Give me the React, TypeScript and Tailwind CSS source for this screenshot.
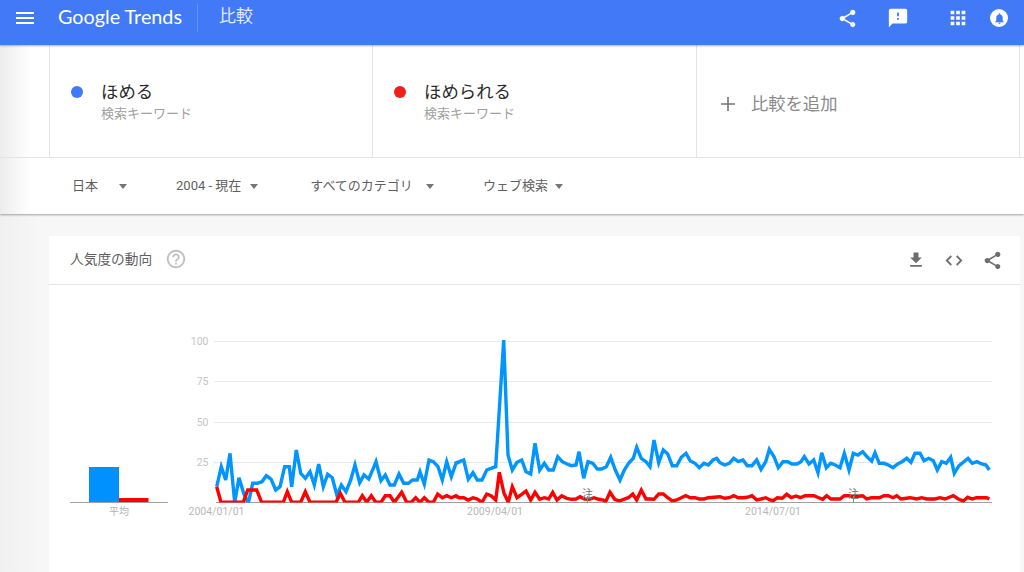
const font = { fontFamily: '"Roboto", "Noto Sans CJK JP", sans-serif' };

// series traced from the chart, as flat x,y lists per chart section
const toPoints = (list: number[], ox: number, oy: number) => {
  const out: string[] = [];
  for (let i = 0; i < list.length; i += 2) {
    out.push(`${(ox + list[i] / 3).toFixed(1)},${(oy + list[i + 1] / 3).toFixed(1)}`);
  }
  return out.join(" ");
};

const blueA = [110,470,124,410,137,450,150,370,164,517,177,443,191,490,205,520,218,460,232,460,246,455,259,437,273,447,287,480,300,470,314,410,328,410,335,470,349,360,362,430,376,445,390,425,403,465,416,402,430,470,443,433,457,443,471,497,484,465,498,485,512,450,525,405,539,458,552,435,566,447,580,415,588,395,603,452,616,435,630,465,643,465,657,432,671,460,685,460,698,450,712,450,720,425,733,462,747,390,760,395,774,410,787,450,800,395,814,440,828,400,840,395];
const blueB = [14,400,28,395,41,390,55,448,69,428,82,450,96,450,110,420,123,415,137,410,161,30,174,375,187,420,201,397,215,390,228,425,242,432,255,340,269,420,283,400,296,420,310,420,323,380,337,395,351,402,364,407,378,405,387,365,401,445,414,395,428,400,442,417,455,417,469,410,482,382,496,420,510,450,523,420,537,398,550,385,560,352,574,385,588,395,600,410,612,330,626,398,640,360,653,372,667,407,680,407,694,382,708,370,721,393,735,400,748,413,762,400,775,405,789,390,800,385];
const blueC = [0,188,14,195,28,190,41,175,55,185,69,180,82,197,96,197,110,180,123,208,137,185,148,148,162,170,175,203,189,185,203,185,216,192,230,192,243,185,253,170,267,192,281,180,294,218,305,158,319,203,332,190,346,195,360,203,373,160,387,210,400,160,414,165,428,155,441,170,455,183,465,158,478,190,492,190,505,195,519,203,533,192,546,185,560,175,573,187,585,160,600,160,612,182,626,175,640,182,652,210,665,185,679,190,692,172,703,220,717,197,730,187,744,175,757,190,771,185,785,192,798,195,808,210];

const redA = [110,470,123,517,190,517,203,480,230,480,245,517,310,517,322,485,335,517,362,517,376,485,390,517,468,517,481,490,495,517,535,517,547,497,560,517,574,497,587,517,603,517,616,497,630,497,643,517,665,487,680,517,694,517,707,503,720,517,733,503,747,517,760,517,773,492,787,503,800,497,814,503,828,497,840,505];
const redB = [14,497,28,503,41,503,55,510,69,503,82,507,96,517,110,492,123,497,137,510,148,427,162,490,175,517,187,470,201,503,215,493,228,483,242,510,255,487,269,508,283,503,296,507,308,487,321,510,335,497,350,505,364,508,378,507,390,500,404,507,418,508,432,503,446,508,460,510,467,515,480,487,494,508,508,513,521,508,535,503,548,492,560,510,574,480,588,507,600,507,612,508,626,492,640,492,653,503,667,513,680,510,694,503,707,497,721,503,735,503,748,507,762,507,775,503];
const redC = [0,290,14,295,28,293,41,287,55,293,69,293,82,292,96,287,110,300,123,297,137,293,150,300,160,302,172,293,187,295,200,283,214,293,228,288,241,293,255,287,282,287,296,293,308,298,320,287,333,297,360,297,373,287,387,287,400,290,428,287,440,297,455,293,478,293,492,287,505,287,519,293,530,287,543,297,570,293,590,297,605,293,620,297,645,297,660,293,675,297,700,287,715,297,730,303,743,292,757,297,770,293,800,293,808,297];

const bluePoints = [toPoints(blueA, 180, 330), toPoints(blueB, 450, 330), toPoints(blueC, 720, 400)].join(" ");
const redPoints = [toPoints(redA, 180, 330), toPoints(redB, 450, 330), toPoints(redC, 720, 400)].join(" ");

const sharePath =
  "M18 16.08c-.76 0-1.44.3-1.96.77L8.91 12.7c.05-.23.09-.46.09-.7s-.04-.47-.09-.7l7.05-4.11c.54.5 1.25.81 2.04.81 1.66 0 3-1.34 3-3s-1.34-3-3-3-3 1.34-3 3c0 .24.04.47.09.7L8.04 9.81C7.5 9.31 6.79 9 6 9c-1.66 0-3 1.34-3 3s1.34 3 3 3c.79 0 1.5-.31 2.04-.81l7.12 4.16c-.05.21-.08.43-.08.65 0 1.61 1.31 2.92 2.92 2.92 1.61 0 2.92-1.31 2.92-2.92s-1.31-2.92-2.92-2.92z";

function Icon({ d, className }: { d: string; className: string }) {
  return (
    <svg viewBox="0 0 24 24" fill="currentColor" className={className}>
      <path d={d} />
    </svg>
  );
}

function Caret({ className }: { className: string }) {
  return <span className={`w-0 h-0 border-x-[4.5px] border-x-transparent border-t-[5px] border-t-[#757575] ${className}`} />;
}

function Term({ color, label, className }: { color: string; label: string; className: string }) {
  return (
    <div className={`h-full shrink-0 border-l border-[#e4e4e4] flex pl-[21px] pt-[35px] ${className}`}>
      <span className={`w-3 h-3 rounded-full mt-[6px] ${color}`} />
      <div className="ml-[18px]">
        <div className="text-[17.4px] leading-6 text-[#2b2b2b]">{label}</div>
        <div className="text-[13px] leading-[18px] mt-[1px] text-[#a0a0a0]">検索キーワード</div>
      </div>
    </div>
  );
}

function Chart() {
  const grid = [
    { y: 341, label: "100" },
    { y: 381, label: "75" },
    { y: 422, label: "50" },
    { y: 462, label: "25" },
  ];
  return (
    <svg viewBox="49 285 971 287" className="block w-[971px] h-[287px]" style={font}>
      <defs>
        <clipPath id="plot">
          <rect x="205" y="335" width="800" height="167.5" />
        </clipPath>
      </defs>
      {grid.map((g) => (
        <g key={g.y}>
          <line x1="214" x2="992" y1={g.y + 0.5} y2={g.y + 0.5} stroke="#e8e8e8" />
          <text x="208.5" y={g.y + 4} textAnchor="end" fontSize="10.5" fill="#c4c4c4">
            {g.label}
          </text>
        </g>
      ))}
      <line x1="216" x2="992" y1="502.5" y2="502.5" stroke="#a0a0a0" />
      <line x1="70" x2="168" y1="502.5" y2="502.5" stroke="#a0a0a0" />
      <rect x="89" y="467" width="30" height="35" fill="#0091ff" />
      <rect x="119" y="498" width="29.5" height="4" fill="#ff0000" />
      <text x="119" y="515" textAnchor="middle" fontSize="10" fill="#b4b4b4">平均</text>

      <g clipPath="url(#plot)" fill="none" strokeWidth="3.4" strokeLinejoin="miter">
        <polyline points={bluePoints} stroke="#0095ff" />
        <polyline points={redPoints} stroke="#ff0000" />
      </g>

      <text x="216.5" y="514.5" textAnchor="middle" fontSize="10.5" fill="#b8b8b8">2004/01/01</text>
      <text x="495" y="514.5" textAnchor="middle" fontSize="10.5" fill="#b8b8b8">2009/04/01</text>
      <text x="773" y="514.5" textAnchor="middle" fontSize="10.5" fill="#b8b8b8">2014/07/01</text>

      <line x1="587.5" x2="587.5" y1="496" y2="503" stroke="#8a8a8a" />
      <text x="587.5" y="498" textAnchor="middle" fontSize="11" fill="#757575">注</text>
      <line x1="853.5" x2="853.5" y1="496" y2="503" stroke="#8a8a8a" />
      <text x="853.5" y="498" textAnchor="middle" fontSize="11" fill="#757575">注</text>
    </svg>
  );
}

export default function App() {
  return (
    <div className="w-[1024px] h-[572px] overflow-hidden flex flex-col bg-[#f6f6f6]" style={font}>
      <header className="relative z-10 h-[45px] shrink-0 bg-[#4179f6] shadow-[0_1px_2px_rgba(0,0,0,0.3)] flex items-start text-white">
        <Icon
          className="w-6 h-6 ml-[13px] mt-[6px] shrink-0"
          d="M3 18h18v-2H3v2zm0-5h18v-2H3v2zm0-7v2h18V6H3z"
        />
        <div className="ml-[21px] mt-[2px] text-[19.8px] leading-7 whitespace-nowrap w-[139px]" style={{ fontFamily: '"Lato", sans-serif' }}>
          Google Trends
        </div>
        <div className="w-px h-[28px] mt-[4px] bg-white/20" />
        <div className="ml-[21px] mt-[2px] text-[17px] leading-7 text-white/85">比較</div>
        <div className="ml-auto flex items-center h-9 pr-[16px]">
          <Icon className="w-[21px] h-[21px]" d={sharePath} />
          <Icon
            className="w-[22px] h-[22px] ml-[29px]"
            d="M20 2H4c-1.1 0-1.99.9-1.99 2L2 22l4-4h14c1.1 0 2-.9 2-2V4c0-1.1-.9-2-2-2zm-7 12h-2v-2h2v2zm0-4h-2V6h2v4z"
          />
          <Icon
            className="w-[22px] h-[22px] ml-[38px]"
            d="M4 8h4V4H4v4zm6 12h4v-4h-4v4zm-6 0h4v-4H4v4zm0-6h4v-4H4v4zm6 0h4v-4h-4v4zm6-10v4h4V4h-4zm-6 4h4V4h-4v4zm6 6h4v-4h-4v4zm0 6h4v-4h-4v4z"
          />
          <span className="w-[18px] h-[18px] ml-[21px] rounded-full bg-white flex items-center justify-center text-[#4179f6]">
            <Icon
              className="w-[13px] h-[13px]"
              d="M12 22c1.1 0 2-.9 2-2h-4c0 1.1.9 2 2 2zm6-6v-5c0-3.07-1.64-5.64-4.5-6.32V4c0-.83-.67-1.5-1.5-1.5s-1.5.67-1.5 1.5v.68C7.63 5.36 6 7.92 6 11v5l-2 2v1h16v-1l-2-2z"
            />
          </span>
        </div>
      </header>

      <section className="relative h-[169px] shrink-0 bg-white shadow-[0_1px_2px_rgba(0,0,0,0.35)]">
        <div className="absolute inset-y-0 left-0 w-[30px] bg-gradient-to-r from-[#ececec] to-white" />
        <div className="relative h-[113px] border-b border-[#e4e4e4] flex pl-[49px]">
          <Term className="w-[323px]" color="bg-[#4179f6]" label="ほめる" />
          <Term className="w-[324px]" color="bg-[#f02018]" label="ほめられる" />
          <div className="w-[324px] h-full shrink-0 border-x border-[#e4e4e4] flex items-center pl-[24px] pt-[5px] text-[#8a8a8a]">
            <svg viewBox="0 0 14 14" className="w-[14px] h-[14px] shrink-0" fill="none" stroke="#757575" strokeWidth="1.6">
              <path d="M7 0v14M0 7h14" />
            </svg>
            <span className="ml-[16px] text-[17.3px] leading-6">比較を追加</span>
          </div>
        </div>
        <div className="relative h-[56px] flex items-center text-[13px] text-[#5f5f5f]">
          <span className="ml-[72px]">日本</span>
          <Caret className="ml-[21px]" />
          <span className="ml-[49px]">2004 - 現在</span>
          <Caret className="ml-[9px]" />
          <span className="ml-[52px]">すべてのカテゴリ</span>
          <Caret className="ml-[13px]" />
          <span className="ml-[49px]">ウェブ検索</span>
          <Caret className="ml-[7px]" />
        </div>
      </section>

      <main className="flex-1 pt-[22px] pl-[49px] bg-gradient-to-r from-[#f0f0f0] to-[#f7f7f7] to-[4%]">
        <div className="w-[971px] h-[340px] bg-white">
          <div className="h-[49px] border-b border-[#e6e6e6] flex items-center pl-[21px] text-[#9a9a9a]">
            <span className="text-[13.7px] text-[#5f5f5f] mt-[-2px]">人気度の動向</span>
            <Icon
              className="w-[22px] h-[22px] ml-[13px] text-[#c0c0c0] mt-[-2px]"
              d="M11 18h2v-2h-2v2zm1-16C6.48 2 2 6.48 2 12s4.48 10 10 10 10-4.48 10-10S17.52 2 12 2zm0 18c-4.41 0-8-3.59-8-8s3.59-8 8-8 8 3.59 8 8-3.59 8-8 8zm0-14c-2.21 0-4 1.79-4 4h2c0-1.1.9-2 2-2s2 .9 2 2c0 2-3 1.75-3 5h2c0-2.25 3-2.5 3-5 0-2.21-1.79-4-4-4z"
            />
            <div className="ml-auto flex items-center pr-[17px] text-[#6e6e6e]">
              <Icon className="w-[20px] h-[20px]" d="M19 9h-4V3H9v6H5l7 7 7-7zM5 18v2h14v-2H5z" />
              <svg viewBox="0 0 20 14" className="w-[18px] h-[13px] ml-[19px]" fill="none" stroke="currentColor" strokeWidth="2">
                <path d="M7 2L2 7l5 5M13 2l5 5-5 5" />
              </svg>
              <Icon className="w-[21px] h-[21px] ml-[19px]" d={sharePath} />
            </div>
          </div>
          <Chart />
        </div>
      </main>
    </div>
  );
}
